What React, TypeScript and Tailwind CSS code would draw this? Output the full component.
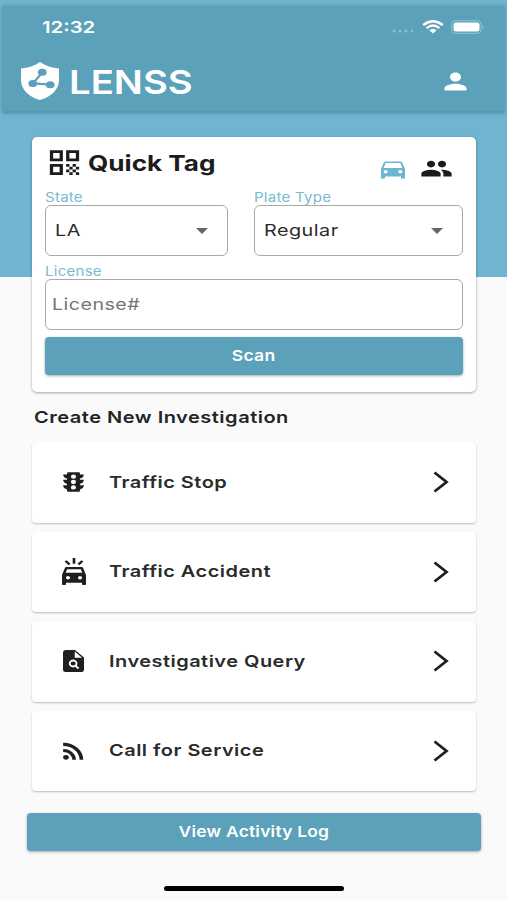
import type { ReactNode } from "react";
import clsx from "clsx";
import {
  MdDirectionsCar,
  MdMinorCrash,
  MdPeople,
  MdPerson,
  MdQrCode,
  MdRssFeed,
  MdTraffic,
} from "react-icons/md";

// wide lettering used across the whole app
function Wide({ className, children }: { className?: string; children: ReactNode }) {
  return (
    <span className={clsx("inline-block whitespace-nowrap", className)}>{children}</span>
  );
}

function Shield() {
  return (
    <svg viewBox="0 0 38 38" className="h-[38px] w-[38px]">
      <path
        d="M19 0C14 3.6 7 6 0 6.6V18c0 9.500 8 17 19 20 11-3 19-10.500 19-20V6.600C31 6 24 3.600 19 0Z"
        fill="#fff"
      />
      <path d="M21.300 10.500 12 21.300 29.500 22.700" stroke="#5aa1b9" strokeWidth="2.200" fill="none" />
      <g fill="#5aa1b9">
        <ellipse cx="21.300" cy="10.300" rx="4.400" ry="3.500" />
        <ellipse cx="11.800" cy="21.500" rx="4.400" ry="3.500" />
        <ellipse cx="29.200" cy="22.700" rx="4.400" ry="3.500" />
      </g>
    </svg>
  );
}

function PageSearch() {
  return (
    <svg viewBox="0 0 22 22" preserveAspectRatio="none" className="h-[22px] w-[21px]">
      <path
        d="M2.500 0H12.500L22 7.500V19.500Q22 22 19.500 22H2.500Q0 22 0 19.500V2.500Q0 0 2.500 0Z"
        fill="#1f1f1f"
      />
      <path d="M12.300 1.600V7.800H20Z" fill="#fff" />
      <ellipse cx="10.600" cy="13.500" rx="3.600" ry="3" fill="none" stroke="#fff" strokeWidth="1.800" />
      <path d="M13 15.700 16.300 18.600" stroke="#fff" strokeWidth="2" />
    </svg>
  );
}

function StatusBar() {
  return (
    <div className="flex h-[42px] items-center pr-[19px] pl-[39px]">
      <Wide className="origin-left scale-x-[1.230] text-[16.500px] font-semibold">12:32</Wide>
      <div className="ml-auto flex items-center">
        <svg viewBox="0 0 24 4" className="mt-2 h-1 w-6" fill="#fff" opacity="0.3">
          <circle cx="3" cy="2" r="1.500" />
          <circle cx="9" cy="2" r="1.500" />
          <circle cx="15" cy="2" r="1.500" />
          <circle cx="21" cy="2" r="1.500" />
        </svg>
        <svg viewBox="0 0 22 14" className="ml-[7px] h-[14px] w-[22px]" fill="none" stroke="#fff">
          <path d="M1.200 5Q11-2.600 20.800 5" strokeWidth="2.500" />
          <path d="M4.600 8.100Q11 3 17.400 8.100" strokeWidth="2.400" />
          <path d="M7.400 10.300Q11 7.800 14.600 10.300L11 13.400Z" fill="#fff" stroke="none" />
        </svg>
        <svg viewBox="0 0 34 14" className="ml-[7px] h-[14px] w-[34px]">
          <rect x="0.700" y="0.700" width="29.500" height="12.600" rx="3.800" fill="none" stroke="#fff" strokeOpacity="0.350" />
          <rect x="2.500" y="2.500" width="26" height="9" rx="2.500" fill="#fff" />
          <path d="M31.700 5Q33.400 7 31.700 9Z" fill="#fff" opacity="0.500" />
        </svg>
      </div>
    </div>
  );
}

function Header() {
  return (
    <header className="mx-[3px] mt-[6px] h-[105px] bg-[#5aa1b9] text-white shadow-[0_0_3px_1px_#5b9db5,0_2px_3px_#4889a2]">
      <StatusBar />
      <div className="flex h-[66px] items-center pr-[32px] pl-[18px]">
        <Shield />
        <Wide className="mt-[3px] ml-[10px] origin-left scale-x-[1.160] text-[33px] font-semibold">LENSS</Wide>
        <MdPerson preserveAspectRatio="none" className="ml-auto h-[27px] w-[33px]" />
      </div>
    </header>
  );
}

function Select({ value }: { value: string }) {
  return (
    <div className="flex h-[51px] items-center justify-between rounded-[6px] border border-[#a9a9a9] pr-[19px] pl-[9px]">
      <Wide className="origin-left scale-x-[1.200] text-[16.500px] tracking-[0.400px] text-[#2b2b2b]">
        {value}
      </Wide>
      <svg viewBox="0 0 12 6" className="h-[6px] w-3" fill="#666">
        <path d="M0 0H12L6 6Z" />
      </svg>
    </div>
  );
}

function Label({ children }: { children: ReactNode }) {
  return (
    <div className="h-[16px] text-[13px] leading-[16px] text-[#78bad3]">
      <Wide className="origin-left scale-x-[1.160] tracking-[0.200px]">{children}</Wide>
    </div>
  );
}

function QuickTag() {
  return (
    <section className="mr-[31px] ml-[32px] h-[255px] rounded-[5px] bg-white px-[13px] shadow-[0_1px_3px_rgba(0,0,0,0.350)]">
      <div className="flex h-[52px]">
        <MdQrCode preserveAspectRatio="none" className="mt-[9px] h-[33px] w-[39px] shrink-0 text-[#1c1c1c]" />
        <Wide className="mt-[10px] ml-[4px] origin-left scale-x-[1.215] text-[21.500px] leading-[32px] font-bold text-[#1c1c1c]">
          Quick Tag
        </Wide>
        <MdDirectionsCar preserveAspectRatio="none" className="mt-[19px] ml-auto h-[26px] w-[32px] text-[#6fb5cf]" />
        <MdPeople preserveAspectRatio="none" className="mt-[18px] mr-[10px] ml-[11px] h-[27px] w-[33px] text-[#1c1c1c]" />
      </div>
      <div className="flex justify-between">
        <div className="w-[183px]">
          <Label>State</Label>
          <Select value="LA" />
        </div>
        <div className="w-[209px]">
          <Label>Plate Type</Label>
          <Select value="Regular" />
        </div>
      </div>
      <div className="mt-[7px]">
        <Label>License</Label>
        <div className="flex h-[51px] items-center rounded-[6px] border border-[#a9a9a9] pl-[6px] text-[16.500px] text-[#757575]">
          <Wide className="origin-left scale-x-[1.190] tracking-[0.400px]">License#</Wide>
        </div>
      </div>
      <button className="mt-[7px] flex h-[38px] w-full items-center justify-center rounded-[4px] bg-[#5aa1b9] text-[15px] font-semibold text-white shadow-[0_1px_3px_rgba(0,0,0,0.350)]">
        <Wide className="scale-x-[1.170] tracking-[0.200px]">Scan</Wide>
      </button>
    </section>
  );
}

const items = [
  {
    label: "Traffic Stop",
    icon: <MdTraffic preserveAspectRatio="none" className="h-[26px] w-[31px]" />,
  },
  {
    label: "Traffic Accident",
    icon: <MdMinorCrash preserveAspectRatio="none" className="h-[27px] w-[32px]" />,
  },
  { label: "Investigative Query", icon: <PageSearch /> },
  {
    label: "Call for Service",
    icon: <MdRssFeed preserveAspectRatio="none" className="h-[26px] w-[31px]" />,
  },
];

function InvestigationCard({ label, icon }: { label: string; icon: ReactNode }) {
  return (
    <div className="flex h-[80.500px] items-center rounded-[4px] bg-white pr-[27px] pl-[21px] text-[#1f1f1f] shadow-[0_1px_2px_rgba(0,0,0,0.250)]">
      <span className="flex w-[41px] justify-center">{icon}</span>
      <Wide className="ml-[15px] origin-left scale-x-[1.210] text-[16.500px] font-semibold tracking-[0.400px] text-[#2b2b2b]">
        {label}
      </Wide>
      <svg viewBox="0 0 16 22" className="ml-auto h-[22px] w-4" fill="none" stroke="currentColor" strokeWidth="2.800">
        <path d="M1.500 1.500 13.500 11 1.500 20.500" />
      </svg>
    </div>
  );
}

export default function App() {
  return (
    <main className="flex h-[900px] w-[507px] flex-col overflow-hidden bg-[linear-gradient(#6fb5cf_277px,#fafafa_277px)] font-['Inter',sans-serif]">
      <Header />
      <div className="mt-[26px]">
        <QuickTag />
      </div>
      <h2 className="ml-[34px] h-[50px] text-[16.500px] leading-[50px] font-semibold text-[#242424]">
        <Wide className="origin-left scale-x-[1.215] tracking-[0.400px]">Create New Investigation</Wide>
      </h2>
      <div className="mr-[31px] ml-[32px] flex flex-col gap-[9px]">
        {items.map((item) => (
          <InvestigationCard key={item.label} {...item} />
        ))}
      </div>
      <button className="mr-[26px] ml-[27px] mt-[22px] flex h-[38px] items-center justify-center rounded-[4px] bg-[#5aa1b9] text-[15px] font-semibold text-white shadow-[0_1px_3px_rgba(0,0,0,0.350)]">
        <Wide className="scale-x-[1.160] tracking-[0.200px]">View Activity Log</Wide>
      </button>
      <div className="mx-auto mt-[35px] h-[5px] w-[180px] rounded-full bg-black" />
    </main>
  );
}
